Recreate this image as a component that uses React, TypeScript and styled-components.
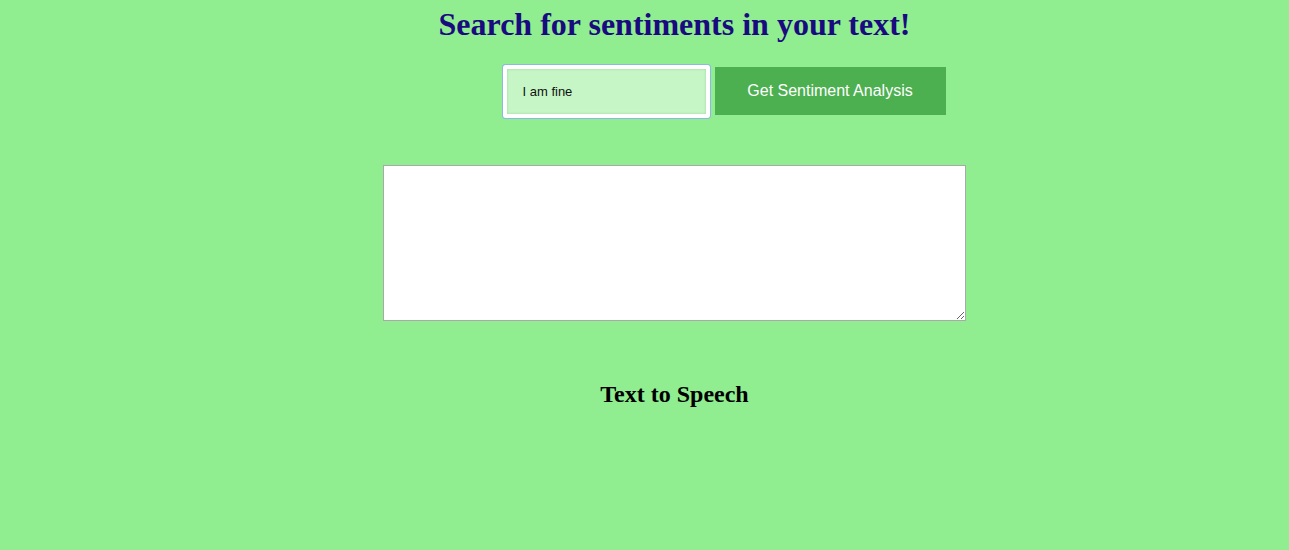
import React, { useState } from 'react';
import styled, { createGlobalStyle } from 'styled-components';

const GlobalStyle = createGlobalStyle`
  html, body {
    margin: 0;
    padding: 0;
    background: #90ee90;
  }
  body {
    margin: 8px;
    font-family: "Liberation Serif", "Times New Roman", serif;
  }
`;

const Page = styled.div`
  padding-left: 60px;
  display: flex;
  flex-direction: column;
  align-items: center;
`;

const Title = styled.h1`
  margin: 0;
  font-size: 32px;
  line-height: 32px;
  font-weight: bold;
  color: #1a0a80;
  text-align: center;
`;

const SearchRow = styled.form`
  display: flex;
  align-items: center;
  gap: 5px;
  margin-top: 25px;
  padding-left: 99px;
`;

const SearchInput = styled.input`
  box-sizing: border-box;
  width: 207px;
  height: 53px;
  border: 4px solid #ffffff;
  border-radius: 2px;
  outline: 1px solid #8db8e6;
  outline-offset: 0;
  background: #c6f6c6;
  box-shadow: inset 0 0 3px rgba(0, 80, 0, 0.18);
  padding: 0 16px;
  font-family: "Liberation Sans", Arial, sans-serif;
  font-size: 13px;
  color: #111;
`;

const SubmitButton = styled.button`
  box-sizing: border-box;
  width: 231px;
  height: 48px;
  margin-top: -1px;
  border: none;
  background: #4caf50;
  color: #ffffff;
  font-family: "Liberation Sans", Arial, sans-serif;
  font-size: 16px;
  cursor: pointer;
`;

const ResultArea = styled.textarea`
  box-sizing: border-box;
  width: 583px;
  height: 156px;
  margin-top: 47px;
  border: 1px solid #a9a9a9;
  background: #ffffff;
  font-family: "Liberation Mono", monospace;
  font-size: 13px;
`;

const SubTitle = styled.h2`
  margin: 59px 0 0;
  font-size: 24px;
  line-height: 28px;
  font-weight: bold;
  color: #000;
  text-align: center;
`;

export default function App() {
  const [text, setText] = useState('I am fine');
  return (
    <>
      <GlobalStyle />
      <Page>
        <Title>Search for sentiments in your text!</Title>
        <SearchRow onSubmit={(e) => e.preventDefault()}>
          <SearchInput value={text} onChange={(e) => setText(e.target.value)} />
          <SubmitButton type="submit">Get Sentiment Analysis</SubmitButton>
        </SearchRow>
        <ResultArea />
        <SubTitle>Text to Speech</SubTitle>
      </Page>
    </>
  );
}
